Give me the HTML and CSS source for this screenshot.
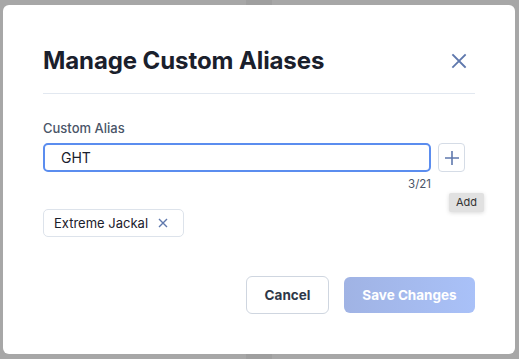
FILE: index.html
```html
<!DOCTYPE html>
<html>
<head>
<meta charset="utf-8">
<link rel="stylesheet" href="styles.css">
</head>
<body>
<div class="backdrop">
  <div class="modal">
    <div class="header">
      <h1 class="title">Manage Custom Aliases</h1>
      <button class="close" aria-label="Close">
        <svg width="16" height="16" viewBox="0 0 16 16"><path d="M2 2L14 14M14 2L2 14" stroke="#5f78ad" stroke-width="1.8" stroke-linecap="square" fill="none"/></svg>
      </button>
    </div>
    <div class="body">
      <label class="label">Custom Alias</label>
      <div class="input-row">
        <div class="input-col">
          <div class="input">GHT</div>
          <div class="counter">3/21</div>
        </div>
        <div class="add-wrap">
          <button class="add">
            <svg width="16" height="16" viewBox="0 0 16 16"><path d="M8 1V15M1 8H15" stroke="#5f78ad" stroke-width="1.6" fill="none"/></svg>
          </button>
          <div class="tooltip">Add</div>
        </div>
      </div>
      <div class="chips">
        <span class="chip">Extreme Jackal
          <svg width="10" height="10" viewBox="0 0 10 10"><path d="M1 1L9 9M9 1L1 9" stroke="#5f78ad" stroke-width="1.4" fill="none"/></svg>
        </span>
      </div>
    </div>
    <div class="footer">
      <button class="btn cancel">Cancel</button>
      <button class="btn save">Save Changes</button>
    </div>
  </div>
</div>
</body>
</html>
```
FILE: styles.css
```css
* { box-sizing: border-box; }
html, body { margin: 0; padding: 0; }
body {
  width: 519px;
  height: 359px;
  overflow: hidden;
  font-family: Inter, "Liberation Sans", sans-serif;
  background:
    linear-gradient(to right, transparent 246px, #9f9f9f 246px, #9f9f9f 272px, transparent 272px),
    #a7a7a7;
}
.backdrop {
  padding: 5px 4px 5px 3px;
}
.modal {
  width: 512px;
  height: 349px;
  background: #fff;
  border-radius: 6px;
  padding: 0 40px;
  display: flex;
  flex-direction: column;
}
.header {
  display: flex;
  align-items: center;
  justify-content: space-between;
  padding: 40px 0 16px;
  border-bottom: 1px solid #e2e8f0;
}
.title {
  margin: 0;
  font-size: 24px;
  line-height: 32px;
  font-weight: 700;
  color: #1a202c;
  letter-spacing: -0.1px;
}
.close {
  border: 0;
  background: none;
  padding: 0;
  width: 16px;
  height: 16px;
  margin-right: 8px;
  display: flex;
}
.body {
  padding-top: 26px;
}
.label {
  display: block;
  font-size: 13px;
  line-height: 16px;
  font-weight: 500;
  color: #4a5568;
  margin-bottom: 7px;
}
.input-row {
  display: flex;
  gap: 7px;
}
.input-col {
  width: 388px;
}
.input {
  height: 29px;
  border: 2px solid #5b8def;
  border-radius: 5px;
  padding: 0 16px;
  font-size: 14px;
  line-height: 25px;
  color: #1a202c;
}
.counter {
  text-align: right;
  font-size: 11.5px;
  line-height: 16px;
  margin-top: 4px;
  color: #4a5568;
}
.add-wrap {
  position: relative;
}
.add {
  width: 27px;
  height: 29px;
  border: 1px solid #d5dce6;
  border-radius: 4px;
  background: #fff;
  padding: 0;
  display: flex;
  align-items: center;
  justify-content: center;
}
.tooltip {
  position: absolute;
  left: 11px;
  top: 50px;
  width: 35px;
  height: 19px;
  background: #e1e1e1;
  color: #333;
  font-size: 11px;
  line-height: 19px;
  text-align: center;
  border-radius: 2px;
  box-shadow: 0 1px 4px rgba(0,0,0,0.15);
}
.chips {
  margin-top: 17px;
  display: flex;
}
.chip {
  display: inline-flex;
  align-items: center;
  gap: 10px;
  height: 28px;
  padding: 0 15px 0 10px;
  border: 1px solid #dde3eb;
  border-radius: 5px;
  font-size: 13px;
  color: #1a202c;
}
.footer {
  display: flex;
  justify-content: flex-end;
  align-items: center;
  gap: 15px;
  margin-top: 39px;
}
.btn {
  font-family: Inter, "Liberation Sans", sans-serif;
  font-size: 13.5px;
  font-weight: 700;
  border-radius: 6px;
}
.cancel {
  width: 83px;
  height: 38px;
  background: #fff;
  border: 1px solid #cfd6e0;
  color: #2d3748;
}
.save {
  width: 131px;
  height: 36px;
  border: 0;
  color: #fff;
  background: linear-gradient(to right, #a0b3e4, #a9c1f8);
}
```
